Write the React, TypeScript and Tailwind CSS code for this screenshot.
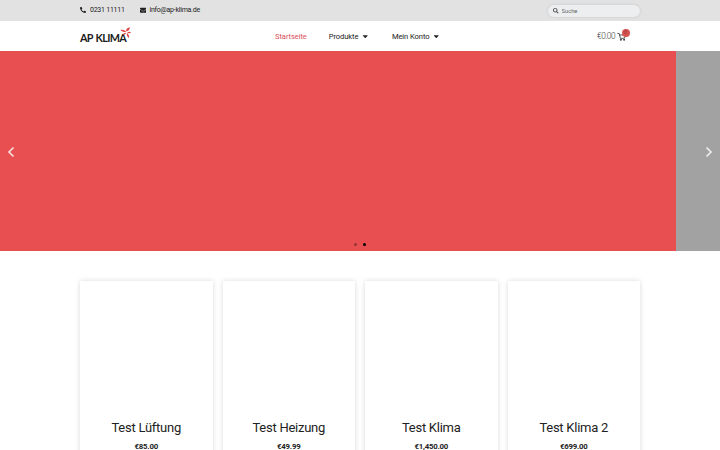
import { FaCaretDown, FaEnvelope, FaPhoneAlt, FaSearch } from 'react-icons/fa';

const NAV_ITEMS = [
  { label: 'Startseite', active: true, dropdown: false },
  { label: 'Produkte', active: false, dropdown: true },
  { label: 'Mein Konto', active: false, dropdown: true },
];

const PRODUCTS = [
  { name: 'Test Lüftung', price: '€85.00' },
  { name: 'Test Heizung', price: '€49.99' },
  { name: 'Test Klima', price: '€1,450.00' },
  { name: 'Test Klima 2', price: '€699.00' },
];

function TopBar() {
  return (
    <div className="h-[21px] bg-[#e2e2e2]">
      <div className="mx-auto flex h-full w-[560px] items-start justify-between">
        <div className="flex h-5 items-center text-[7px] text-[#222]">
          <span className="flex w-[59.5px] items-center">
            <FaPhoneAlt className="mr-1 size-[6px]" />
            <span className="tracking-[-0.25px]">0231 11111</span>
          </span>
          <span className="flex items-center">
            <FaEnvelope className="mr-[3.5px] size-[6.5px]" />
            <span className="tracking-[-0.25px]">info@ap-klima.de</span>
          </span>
        </div>
        <label className="mt-[5px] flex h-3 w-[92px] items-center rounded-full bg-[#eceef0] pl-[5px] shadow-[0_0_3px_rgba(0,0,0,0.12)]">
          <FaSearch className="size-[5.5px] shrink-0 text-[#444]" />
          <input
            type="text"
            placeholder="Suche"
            className="ml-[3px] w-16 bg-transparent text-[5.8px] leading-none text-[#444] outline-none placeholder:text-[#666]"
          />
        </label>
      </div>
    </div>
  );
}

function Logo() {
  return (
    <a href="#" className="relative flex h-full w-[52px] items-center">
      <span className="mt-[3px] font-[Lato,sans-serif] text-[10.8px] leading-none font-bold tracking-[-0.7px] [word-spacing:1.2px] whitespace-nowrap text-[#1c1c1c]">
        AP KLIMA
      </span>
      <svg viewBox="0 0 22 22" className="absolute top-[4.5px] left-[39.5px] size-[11.5px]" fill="#e0413f">
        <path d="M12 9.5C8.5 10.2 4 9 .8 5.6c3.6-1.2 8.4-.2 11.2 3.9Z" />
        <path d="M12.300 8.500C10.800 5 12.800 2 18.800.5c.2 3.600-1.800 6.800-6.500 8Z" />
        <path d="M13.500 10.300c2.500-2 5.900-1.700 7.800.6-2.500 1.300-5.500 1.300-7.800-.6Z" />
        <path d="M13 11.500c3.500 2.400 5 5.800 4.200 9.700-3-2-4.800-5.500-4.200-9.700Z" />
        <path d="M11.700 11.200c-1 2.800-3.300 4.200-6.500 4.200.8-2.600 3.100-4.200 6.500-4.200Z" />
      </svg>
    </a>
  );
}

function Cart() {
  return (
    <a href="#" className="relative mr-[14px] flex items-center text-[8.3px] font-light text-[#333]">
      <span className="tracking-[-0.5px]">€0.00</span>
      <svg
        viewBox="0 0 9 9"
        className="ml-[2px] size-[9px]"
        fill="none"
        stroke="#333"
        strokeWidth="0.8"
        strokeLinecap="round"
        strokeLinejoin="round"
      >
        <path d="M.8 1.500h1.400l1.200 4.800h4L8.500 3H2.600" />
        <circle cx="3.8" cy="7.8" r=".5" fill="#333" />
        <circle cx="7" cy="7.8" r=".5" fill="#333" />
      </svg>
      <span className="absolute -top-[1.5px] -right-[3.5px] flex size-2 items-center justify-center rounded-full bg-[#d9534f] text-[5px] leading-none text-[#6b2828]">
        0
      </span>
    </a>
  );
}

function Header() {
  return (
    <header className="h-[30px] bg-white pt-px">
      <div className="mx-auto grid h-full w-[560px] grid-cols-[1fr_auto_1fr] items-center">
        <Logo />
        <nav className="mr-[4px] flex h-full items-center gap-[22px] text-[7.6px]">
          {NAV_ITEMS.map((item) => (
            <a
              key={item.label}
              href="#"
              className={item.active ? 'flex items-center text-[#d9515a]' : 'flex items-center text-[#222]'}
            >
              <span className="tracking-[-0.1px]">{item.label}</span>
              {item.dropdown && <FaCaretDown className="ml-[3px] size-[8.5px]" />}
            </a>
          ))}
        </nav>
        <div className="flex justify-end">
          <Cart />
        </div>
      </div>
    </header>
  );
}

function Chevron({ className }: { className: string }) {
  return (
    <svg viewBox="0 0 12 12" className={className} fill="none" stroke="currentColor" strokeWidth="1.7">
      <path d="M8.5 1.5 4 6l4.5 4.5" />
    </svg>
  );
}

function Slider() {
  return (
    <section className="relative flex h-[200px] overflow-hidden">
      <div className="w-[676px] shrink-0 bg-[#e84f51]" />
      <div className="flex-1 bg-[#a2a2a2]" />
      <button type="button" aria-label="Zurück" className="absolute top-[94.5px] left-[5px] text-[#f9dcdc]">
        <Chevron className="size-3" />
      </button>
      <button type="button" aria-label="Weiter" className="absolute top-[94.5px] right-[5px] text-[#ededed]">
        <Chevron className="size-3 rotate-180" />
      </button>
      <div className="absolute bottom-[5.5px] left-[354px] flex gap-[6px]">
        <span className="size-[3px] rounded-full bg-black/35" />
        <span className="size-[3px] rounded-full bg-black" />
      </div>
    </section>
  );
}

export default function App() {
  return (
    <div className="h-[450px] w-[720px] overflow-hidden bg-white font-[Roboto,sans-serif] text-[#222]">
      <TopBar />
      <Header />
      <Slider />
      <main className="mx-auto grid w-[560px] grid-cols-4 gap-[10px] pt-[30px]">
        {PRODUCTS.map((product) => (
          <article
            key={product.name}
            className="flex h-[200px] flex-col items-center bg-white pt-[139px] text-center shadow-[0_0_5px_rgba(0,0,0,0.15)]"
          >
            <h2 className="text-[13px] leading-4 tracking-[-0.25px] whitespace-nowrap">{product.name}</h2>
            <p className="mt-[5px] text-[7.8px] leading-3 font-bold tracking-[-0.2px]">{product.price}</p>
          </article>
        ))}
      </main>
    </div>
  );
}
